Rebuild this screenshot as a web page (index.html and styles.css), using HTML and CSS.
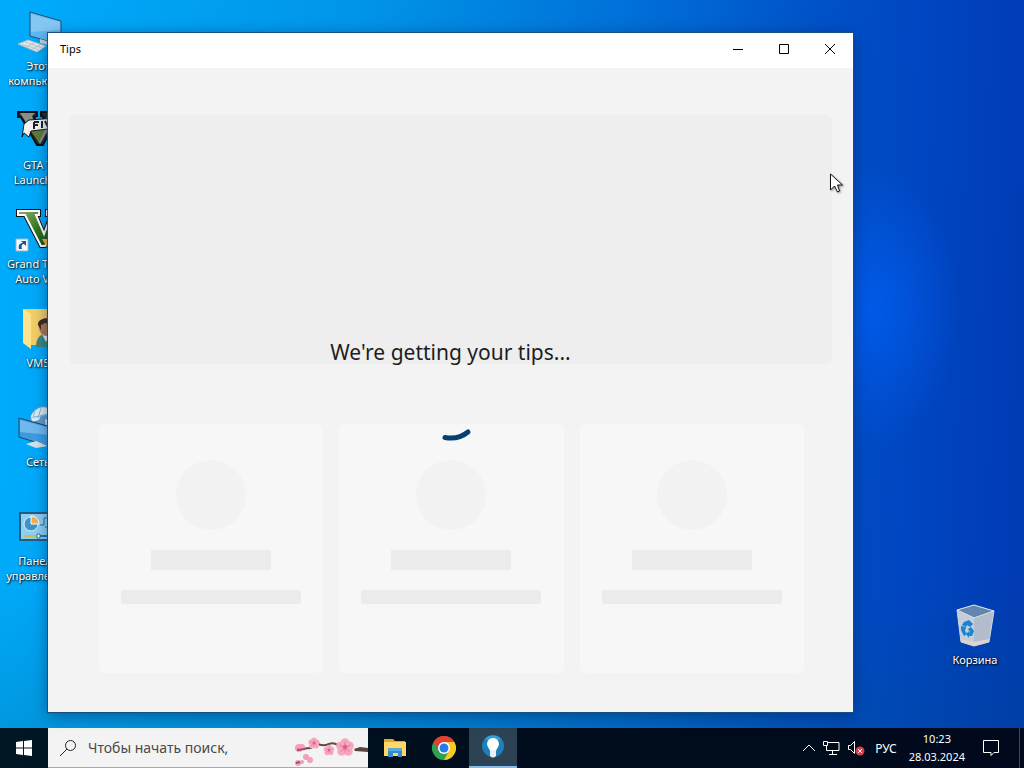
FILE: index.html
```html
<!DOCTYPE html>
<html lang="ru">
<head>
<meta charset="utf-8">
<title>Tips</title>
<link rel="stylesheet" href="styles.css">
</head>
<body>
<main class="desktop">
  <nav class="shortcuts" aria-label="Рабочий стол">
    <a class="shortcut" href="#pc">
      <svg class="shortcut-icon" viewBox="0 0 48 48" aria-hidden="true">
        <path d="M16 4l31 9v24l-31-9z" fill="#5fb8f0" stroke="#23506e"/>
        <path d="M17 6l29 8v8L17 24z" fill="#86c8f4"/>
        <path d="M26 31l10 3 6 5-16-4z" fill="#c8d2d8"/>
        <path d="M4 36l10-4 18 6-9 6z" fill="#e6eaec" stroke="#a8b8c2"/>
        <path d="M8 36l17 6M11 34l17 6M12 39l8-4M18 41l8-4" stroke="#b9c4ca" fill="none"/>
      </svg>
      <span>Этот компьютер</span>
    </a>
    <a class="shortcut" href="#launcher">
      <svg class="shortcut-icon" viewBox="0 0 48 48" aria-hidden="true">
        <path d="M4 5h19v4l-3 1 5 12 5-12-3-1V5h19v5h-3L29 38h-6L7 10H4z" fill="#26302a" stroke="#0d1210" stroke-width="2"/>
        <path d="M6 6h15l-3 3 8 20 8-20h8L26 37z" fill="#8a9089"/>
        <path d="M15 22l10 13 8-17z" fill="#5c7d35"/>
        <path d="M10 17l5-4 28-2v10l-26 3-2 6-5-4-2 4z" fill="#f4f4f0" stroke="#161616"/>
        <path d="M20 15v7M20 15h5M20 18h4M28 14v7M31 14l3 6 3-7M40 13v7" stroke="#222" stroke-width="2" fill="none"/>
      </svg>
      <span>GTA V Launcher</span>
    </a>
    <a class="shortcut" href="#gta">
      <svg class="shortcut-icon" viewBox="0 0 48 48" aria-hidden="true">
        <defs><linearGradient id="vg" x2="1" y2="1"><stop stop-color="#8cae72"/><stop offset=".5" stop-color="#2f7519"/><stop offset="1" stop-color="#153e0f"/></linearGradient></defs>
        <path d="M4 5h21v4h-3l8 19 7-19h-4V5h14v4h-2L31 40h-4L11 9H4z" fill="#111" stroke="#111" stroke-width="4"/>
        <path d="M4 5h21v4h-3l8 19 7-19h-4V5h14v4h-2L31 40h-4L11 9H4z" fill="url(#vg)" stroke="#fff" stroke-width="2"/>
        <path d="M28 33h20v8H33z" fill="#f0b73c"/>
        <path d="M2 33h12v12H2z" fill="#f5f8fb" stroke="#9fb3c4"/>
        <path d="M5 43c-1-4 1-6 4-6l-2-2h5v5l-2-2c-2 0-3 2-2 5z" fill="#19529c"/>
      </svg>
      <span>Grand Theft Auto&nbsp;V&nbsp;...</span>
    </a>
    <a class="shortcut" href="#user">
      <svg class="shortcut-icon" viewBox="0 0 48 48" aria-hidden="true">
        <path d="M9 4h33v36H17z" fill="#f3ce67"/>
        <path d="M9 4l8 5v35l-8-6z" fill="#ffe48d"/>
        <path d="M22 42c0-9 4-13 10-13s11 5 11 13z" fill="#3f867a"/>
        <path d="M28 29l4 8 4-8z" fill="#e9eff0"/>
        <ellipse cx="32" cy="22" rx="7" ry="9" fill="#a97952"/>
        <path d="M24 20c-1-8 16-9 16 0l-9-2-4 2v5z" fill="#3e2a1f"/>
      </svg>
      <span>VM5</span>
    </a>
    <a class="shortcut" href="#network">
      <svg class="shortcut-icon" viewBox="0 0 48 48" aria-hidden="true">
        <circle cx="30" cy="16" r="14" fill="#5b9dcb"/>
        <path d="M17 12c4-9 14-11 21-6l-5 4-6 1-2 5-7 2zM31 16l7-4 5 5-3 9-8-3z" fill="#d7ecf6"/>
        <path d="M21 6l-2 8M27 4l-3 10M20 13l13-2" stroke="#82b4d3" fill="none"/>
        <path d="M5 14l32 9v20L5 33z" fill="#3f9be0" stroke="#174869"/>
        <path d="M6 16l30 8v7L6 28z" fill="#6fb9ee"/>
        <path d="M12 40l10-3 12 5-12 2z" fill="#d5e2e8"/>
      </svg>
      <span>Сеть</span>
    </a>
    <a class="shortcut" href="#control">
      <svg class="shortcut-icon" viewBox="0 0 48 48" aria-hidden="true">
        <path d="M6 10h40v27H6z" fill="#8cd0f2" stroke="#285c7e" stroke-width="2"/>
        <circle cx="17" cy="21" r="7" fill="#3f93c9" stroke="#d9f2ff"/>
        <path d="M17 21v-8a8 8 0 018 8z" fill="#f4b04a" stroke="#fff"/>
        <path d="M26 22h4v-7h9M31 24h8" fill="none" stroke="#286e9b"/>
        <path d="M10 33h12" stroke="#c9c05b" stroke-width="2"/><path d="M26 33h17" stroke="#1d76b6" stroke-width="2"/>
        <path d="M23 31h3v4h-3z" fill="#fff" stroke="#3d7794"/>
      </svg>
      <span>Панель управления</span>
    </a>
  </nav>
  <a class="shortcut bin" href="#bin">
    <svg class="shortcut-icon" viewBox="0 0 48 48" aria-hidden="true">
      <path d="M6 8l17-5 20 6-20 7z" fill="#6485b0" stroke="#e7edf2"/>
      <path d="M6 8l17 8v28l-13-4z" fill="#c4cdd8"/>
      <path d="M23 16l20-7-5 31-15 4z" fill="#b2bcca"/>
      <path d="M6 8l17 8 20-7-5 31-15 4-13-4z" fill="none" stroke="#d0d9e2"/>
      <path d="M10 37l13 3 15-3-1 3-14 4-12-4z" fill="#ddd5cc"/>
      <g fill="#1685d6"><path d="M13 20l5-2 4 4-3 3-3-2-1 2-4-2z"/><path d="M10 24l5 1-1 4 2 3-3 2-3-6z"/><path d="M20 25l3 4-2 5h-3v2l-3-4 3-3v2l1-1-2-3z"/></g>
    </svg>
    <span>Корзина</span>
  </a>

  <section class="window" aria-label="Tips">
    <header class="titlebar">
      <h1 class="title">Tips</h1>
      <div class="controls">
        <button class="control" type="button" aria-label="Свернуть"><svg viewBox="0 0 10 10" aria-hidden="true"><path d="M0 5.500h10"/></svg></button>
        <button class="control" type="button" aria-label="Развернуть"><svg viewBox="0 0 10 10" aria-hidden="true"><path d="M.5.500h9v9h-9z"/></svg></button>
        <button class="control" type="button" aria-label="Закрыть"><svg viewBox="0 0 10 10" aria-hidden="true"><path d="M0 0l10 10M10 0L0 10"/></svg></button>
      </div>
    </header>
    <div class="content">
      <div class="hero"></div>
      <div class="cards">
        <div class="card"><div class="avatar"></div><div class="bar"></div><div class="bar bar-long"></div></div>
        <div class="card"><div class="avatar"></div><div class="bar"></div><div class="bar bar-long"></div></div>
        <div class="card"><div class="avatar"></div><div class="bar"></div><div class="bar bar-long"></div></div>
      </div>
      <div class="loading" role="status">
        <p class="message">We're getting your tips...</p>
        <svg class="spinner" viewBox="0 0 64 64" aria-hidden="true"><path d="M26 58.500Q39 61 49 53"/></svg>
      </div>
    </div>
  </section>
  <svg class="pointer" viewBox="0 0 14 20" aria-hidden="true"><path d="M.5 1v16l4-4 3 6 2-1-2-6h5z"/></svg>
</main>

<footer class="taskbar">
  <button class="task start" type="button" aria-label="Пуск">
    <svg width="16" height="16" viewBox="0 0 16 16" aria-hidden="true"><path d="M0 2l7-1v6.500H0zM8 1l8-1v7.500H8zM0 8.500h7V15l-7-1zM8 8.500h8V16l-8-1z" fill="#fff"/></svg>
  </button>
  <label class="search">
    <svg class="search-icon" width="16" height="16" viewBox="0 0 16 16" aria-hidden="true"><circle cx="10.500" cy="5.500" r="5"/><path d="M7 9L0 16"/></svg>
    <input class="search-input" type="text" aria-label="Поиск" placeholder="Чтобы начать поиск,">
    <svg class="blossom" width="74" height="30" viewBox="0 0 74 30" aria-hidden="true">
      <defs><g id="flower"><circle cy="-4" r="4"/><circle cx="4" cy="-1" r="4"/><circle cx="3" cy="4" r="4"/><circle cx="-3" cy="4" r="4"/><circle cx="-4" cy="-1" r="4"/><path d="M0-5v10M-5-2L4 4M5-2l-9 6" stroke="#ea7fa0"/><circle r="2" fill="#dc6088"/></g></defs>
      <path d="M7 12q7-1 11-1M23 6q5 4 12 1t15 7" fill="none" stroke="#69493b" stroke-width="2"/>
      <path d="M60 12l6-2 8 1v4l-13-1z" fill="#56443f"/>
      <g fill="#f6a8c0"><use href="#flower" transform="translate(51 10)scale(1.100)"/><use href="#flower" transform="translate(35 13)scale(.65)"/><use href="#flower" transform="translate(20 6)scale(.7)"/></g>
      <g fill="#f0a0b8"><circle cx="5" cy="11" r="4"/><circle cx="8" cy="10" r="3"/><circle cx="4" cy="26" r="3"/><circle cx="8" cy="25" r="2"/><circle cx="12" cy="20" r="3"/><circle cx="16" cy="23" r="3"/></g>
      <path d="M3 13l8-1M2 26l4-1" stroke="#a94b65" stroke-width="2"/>
    </svg>
  </label>
  <button class="task" type="button" aria-label="Проводник">
    <svg width="22" height="18" viewBox="0 0 22 18" aria-hidden="true"><path d="M0 0h9l2 2h10v4H0z" fill="#e3a52c"/><path d="M1 3h21v14H0V3z" fill="#ffd766"/><path d="M4 9h14v9h-4v-4H9v4H4z" fill="#368cc8"/><path d="M4 9h14v3H4z" fill="#58aadd"/></svg>
  </button>
  <button class="task" type="button" aria-label="Chrome">
    <svg width="24" height="24" viewBox="0 0 24 24" aria-hidden="true"><path d="M12 12L1.600 6A12 12 0 0122.400 6z" fill="#e34133"/><path d="M12 12V6h10.400A12 12 0 0112 24z" fill="#fbc922"/><path d="M12 12l5 3-5 9A12 12 0 011.600 6z" fill="#2ca250"/><path d="M6 6h16.400A12 12 0 001.600 6L7 15z" fill="#e34133"/><circle cx="12" cy="12" r="6" fill="#fff"/><circle cx="12" cy="12" r="4.500" fill="#267bea"/></svg>
  </button>
  <button class="task task-active" type="button" aria-label="Tips">
    <svg width="22" height="24" viewBox="0 0 22 24" aria-hidden="true"><circle cx="11" cy="11" r="11" fill="#1c80bd"/><path d="M3 4a11 11 0 0116 0L11 8z" fill="#3a9fd8"/><path d="M8 16c0-2-3-4-3-7a6 6 0 0112 0c0 3-3 5-3 7z" fill="#fff"/><path d="M8 15h6v6q-3 3-6 0z" fill="#e6f2f7"/></svg>
  </button>
  <div class="tray">
    <button class="tray-item" type="button" aria-label="Скрытые значки"><svg width="12" height="8" viewBox="0 0 12 8" aria-hidden="true"><path d="M0 7l6-6 6 6"/></svg></button>
    <button class="tray-item" type="button" aria-label="Сеть"><svg width="17" height="14" viewBox="0 0 17 14" aria-hidden="true"><path d="M5 1.500h11v8H3.500V5M.5.500h4v4h-4zM9.500 10v3M6 13.500h8"/></svg></button>
    <button class="tray-item" type="button" aria-label="Звук выключен"><svg width="17" height="16" viewBox="0 0 17 16" aria-hidden="true"><path d="M.5 5.500h2l4-4v12l-4-4h-2z"/><circle cx="12" cy="11" r="4.500" fill="#d63d48" stroke="none"/><path d="M10 9l4 4M14 9l-4 4"/></svg></button>
    <button class="tray-item language" type="button">РУС</button>
    <button class="tray-item clock" type="button"><time>10:23</time><time>28.03.2024</time></button>
    <button class="tray-item notices" type="button" aria-label="Уведомления"><svg width="16" height="16" viewBox="0 0 16 16" aria-hidden="true"><path d="M.5.500h15v12H11l-3 3v-3H.5z"/></svg></button>
  </div>
</footer>
</body>
</html>
```

FILE: styles.css
```css
* { box-sizing: border-box; }

body {
  margin: 0;
  height: 100vh;
  display: flex;
  flex-direction: column;
  overflow: hidden;
  font-family: "Noto Sans", "Open Sans", sans-serif;
  font-size: 12px;
  background:
    radial-gradient(ellipse 90px 140px at 85% 40%, #005ae8 0%, #005ae800 100%),
    linear-gradient(#0000 75%, #00507033 95%),
    linear-gradient(92deg, #00acfc 0%, #0094e8 35%, #0070d8 60%, #0052c8 78%, #0046c2 88%, #003ab2 100%);
}

button { border: 0; padding: 0; margin: 0; background: none; font: inherit; color: inherit; }
svg { display: block; flex: none; }

.desktop { position: relative; flex: 1; min-height: 0; }

.shortcuts { display: flex; flex-direction: column; gap: 7px; padding-top: 8px; }

.shortcut {
  width: 76px;
  height: 92px;
  display: flex;
  flex-direction: column;
  align-items: center;
  color: #fff;
  line-height: 15px;
  font-size: 11px;
  text-align: center;
  text-decoration: none;
  text-shadow: 1px 1px 2px #000, 0 0 2px #0008;
}
.shortcut-icon { width: 48px; height: 48px; margin-bottom: 2px; }
.bin { position: absolute; right: 11px; bottom: 34px; }

.window {
  position: absolute;
  inset: 33px 171px 16px 48px;
  display: flex;
  flex-direction: column;
  background: #f3f3f3;
  box-shadow: 0 0 0 1px #174f80, 0 3px 14px #00205088;
}
.titlebar {
  height: 35px;
  flex: none;
  display: flex;
  justify-content: space-between;
  background: #fff;
  color: #000;
}
.title { margin: 0; padding-left: 12px; font-size: 11px; font-weight: 400; line-height: 32px; }
.controls { display: flex; height: 32px; }
.control { width: 46px; display: grid; place-items: center; }
.control svg { width: 10px; height: 10px; overflow: visible; fill: none; stroke: #000; }

.content {
  position: relative;
  flex: 1;
  display: flex;
  flex-direction: column;
  gap: 60px;
  padding: 47px 21px 39px;
}
.hero { flex: 1; border-radius: 6px; background: #eee; }
.cards {
  flex: 1;
  display: grid;
  grid-template-columns: repeat(3, 1fr);
  gap: 16px;
  padding: 0 28px 0 30px;
}
.card {
  display: flex;
  flex-direction: column;
  align-items: center;
  gap: 20px;
  padding-top: 36px;
  border-radius: 6px;
  background: #f7f7f7;
}
.avatar { width: 70px; height: 70px; border-radius: 50%; background: #f2f2f2; }
.bar { width: 120px; height: 20px; background: #ebebeb; }
.bar-long { width: 180px; height: 14px; border-radius: 3px; }

.loading {
  position: absolute;
  inset: 0;
  display: flex;
  flex-direction: column;
  align-items: center;
  justify-content: center;
  gap: 12px;
}
.message { margin: 0; font-size: 21px; line-height: 30px; color: #1d1d1d; }
.spinner { width: 64px; height: 64px; fill: none; stroke: #063f72; stroke-width: 5; stroke-linecap: round; }

.pointer {
  position: absolute;
  left: 830px;
  top: 173px;
  width: 14px;
  height: 20px;
  fill: #fff;
  stroke: #111;
  filter: drop-shadow(1px 1px 1px #0006);
}

.taskbar { height: 40px; flex: none; display: flex; background: linear-gradient(90deg, #001724, #000d1c 50%, #010a1c); color: #fff; }
.task { width: 48px; margin-right: 1px; display: grid; place-items: center; }
.start { margin-right: 0; }
.task-active { background: #2d4353; border-bottom: 2px solid #83bce8; }

.search {
  flex: 0 1 320px;
  display: flex;
  align-items: center;
  padding-left: 12px;
  margin-right: 3px;
  background: #f3f3f3;
  border-bottom: 1px solid #aaa;
}
.search-icon { fill: none; stroke: #222; }
.search-input {
  flex: 1;
  min-width: 0;
  padding: 0 0 0 12px;
  border: 0;
  outline: 0;
  background: none;
  font: 14px "Noto Sans", sans-serif;
}
.search-input::placeholder { color: #4a4a4a; opacity: 1; }
.blossom { margin-top: 8px; }

.tray {
  margin-left: auto;
  margin-right: 4px;
  display: flex;
  align-items: center;
  gap: 8px;
  padding-right: 20px;
  border-right: 1px solid #3c4656;
}
.tray-item svg { fill: none; stroke: #fff; }
.language { margin-left: 2px; }
.clock { display: flex; flex-direction: column; align-items: center; font-size: 11px; line-height: 18px; margin-left: 4px; }
.notices { margin-left: 10px; }
```
